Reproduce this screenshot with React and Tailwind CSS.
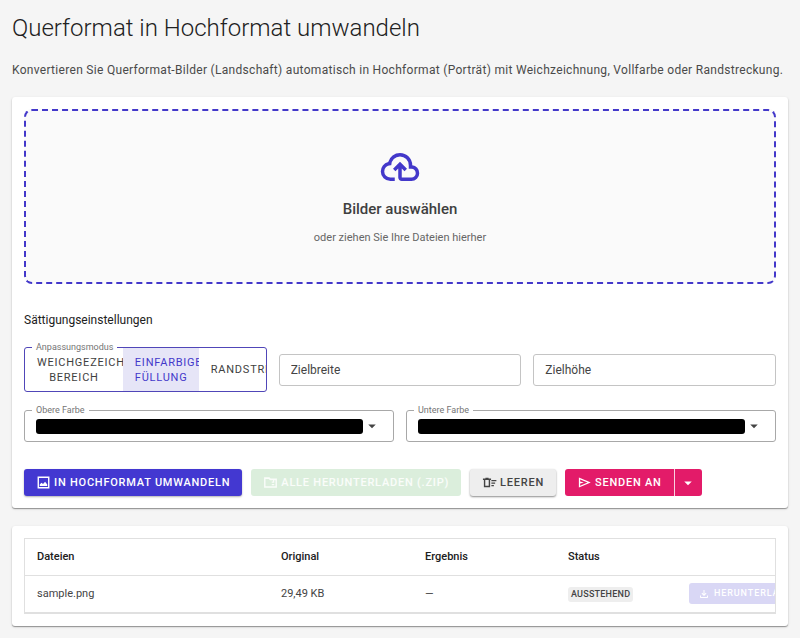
import React from "react";

const paths = {
  upload:
    "M260-160q-91 0-155.5-63T40-377q0-78 47-139t123-78q25-92 100-149t170-57q117 0 198.5 81.5T760-520q69 8 114.5 59.5T920-340q0 75-52.5 127.5T740-160H520q-33 0-56.5-23.5T440-240v-206l-64 62-56-56 160-160 160 160-56 56-64-62v206h220q42 0 71-29t29-71q0-42-29-71t-71-29h-60v-80q0-83-58.5-141.5T480-720q-83 0-141.5 58.5T280-520h-20q-58 0-99 41t-41 99q0 58 41 99t99 41h100v80H260Z",
  image:
    "M100-100v-760h760v760H100Zm90-90h580v-580H190v580Zm50-70v-90l110-120 100 90 130-150 140 170v100H240Z",
  zip: "M70-150v-660h340l80 80h400v580H70Zm90-90h400v-390H450l-80-80H160v470Zm400-390v80h80v80h-80v80h80v80h-80v70h240v-390h-80v80h-80v-80h-80Zm80 80h80v80h-80v-80Zm0 160h80v80h-80v-80Z",
  sweep:
    "M600-240v-80h160v80H600Zm0-320v-80h320v80H600Zm0 160v-80h240v80H600ZM120-640H60v-90h160v-60h200v60h160v90h-60v460H120v-460Zm90 0v370h220v-370H210Z",
  send: "M120-160v-640l760 320-760 320Zm80-120 474-200-474-200v140l240 60-240 60v140Z",
  download:
    "M480-320 280-520l56-58 104 104v-326h80v326l104-104 56 58-200 200ZM240-160q-33 0-56.5-23.5T160-240v-120h80v120h480v-120h80v120q0 33-23.5 56.5T720-160H240Z",
  down: "M480-360 280-560h400L480-360Z",
};

function Icon({ name, className }) {
  return (
    <svg viewBox="0 -960 960 960" fill="currentColor" aria-hidden="true" className={className}>
      <path d={paths[name]} />
    </svg>
  );
}

const modes = [
  { label: "WEICHGEZEICHNETER BEREICH", style: "flex-[74] text-[#3f3f3f]" },
  { label: "EINFARBIGE FÜLLUNG", style: "flex-[52] bg-[#e6e5f7] text-[#4338ca]", on: true },
  { label: "RANDSTRECKUNG", style: "flex-[43] text-[#3f3f3f]" },
];

function SizeField({ label }) {
  return (
    <input
      type="text"
      placeholder={label}
      aria-label={label}
      className="h-8 w-full min-w-0 rounded-[3px] border border-[#c4c4c4] bg-white px-[11px] text-xs text-[#444] placeholder:text-[#444] placeholder:opacity-100"
    />
  );
}

function ColorField({ id, label }) {
  return (
    <div className="relative flex h-8 items-center rounded-[3px] border border-[#a8a8a8] pr-3 pl-[11px]">
      <label htmlFor={id} className="absolute -top-[7px] left-[7px] bg-white px-1 text-[9px] leading-3 text-[#757575]">
        {label}
      </label>
      <input
        id={id}
        type="color"
        defaultValue="#000000"
        className="h-[15px] min-w-0 flex-1 cursor-pointer appearance-none overflow-hidden rounded-[3px] border-0 bg-black p-0 [&::-webkit-color-swatch]:border-0 [&::-webkit-color-swatch-wrapper]:p-0"
      />
      <Icon name="down" className="size-[18px] text-[#444]" />
    </div>
  );
}

const action =
  "flex h-[27px] items-center gap-[3px] rounded-[3px] px-3 text-[11px] font-medium leading-4 tracking-[0.07em] whitespace-nowrap";

export default function App() {
  return (
    <main className="min-h-screen bg-[#f5f5f5] p-3 font-['Roboto',sans-serif] text-[#212121]">
      <h1 className="text-2xl leading-8 font-light">Querformat in Hochformat umwandeln</h1>
      <p className="mt-4 text-xs leading-5 tracking-wide text-[#4a4a4a]">
        Konvertieren Sie Querformat-Bilder (Landschaft) automatisch in Hochformat (Porträt) mit Weichzeichnung, Vollfarbe oder Randstreckung.
      </p>

      <section className="mt-[17px] rounded-[3px] bg-white p-3 shadow-[0_1px_1px_rgba(0,0,0,0.35),0_1px_3px_rgba(0,0,0,0.12)]">
        <button
          type="button"
          className="flex h-[175px] w-full flex-col items-center rounded-lg border-2 border-dashed border-[#4338ca] bg-[#fafafa] pt-[35px]"
        >
          <Icon name="upload" className="size-[42px] text-[#4338ca]" />
          <span className="mt-[11px] text-[15px] leading-5 font-medium text-[#3f3f3f]">Bilder auswählen</span>
          <span className="mt-[9px] text-[11px] leading-5 text-[#666]">oder ziehen Sie Ihre Dateien hierher</span>
        </button>

        <h2 className="mt-[26px] text-xs leading-5">Sättigungseinstellungen</h2>

        <div className="mt-[17px] grid grid-cols-3 items-center gap-3">
          <fieldset className="relative flex h-[45px] min-w-0 rounded-[3px] border border-[#5046b8]">
            <legend className="absolute -top-[7px] left-[7px] bg-white px-1 text-[9px] leading-3 text-[#757575]">
              Anpassungsmodus
            </legend>
            {modes.map((m) => (
              <button
                key={m.label}
                type="button"
                aria-pressed={!!m.on}
                className={`min-w-0 overflow-hidden px-3 text-center text-[11px] leading-[15px] tracking-[0.07em] ${m.style}`}
              >
                {m.label}
              </button>
            ))}
          </fieldset>
          <SizeField label="Zielbreite" />
          <SizeField label="Zielhöhe" />
        </div>

        <div className="mt-[18px] grid grid-cols-2 gap-3">
          <ColorField id="top-color" label="Obere Farbe" />
          <ColorField id="bottom-color" label="Untere Farbe" />
        </div>

        <div className="mt-[27px] flex flex-wrap gap-x-[9px] gap-y-2">
          <button type="button" className={`${action} bg-[#4338d1] text-white shadow-[0_1px_2px_rgba(0,0,0,0.3)]`}>
            <Icon name="image" className="size-[15px]" />
            IN HOCHFORMAT UMWANDELN
          </button>
          <button type="button" disabled className={`${action} bg-[#dbeedc] text-white/85`}>
            <Icon name="zip" className="size-[15px]" />
            ALLE HERUNTERLADEN (.ZIP)
          </button>
          <button type="button" className={`${action} bg-[#eeeeee] text-[#444] shadow-[0_1px_2px_rgba(0,0,0,0.45)]`}>
            <Icon name="sweep" className="size-[15px]" />
            LEEREN
          </button>
          <div className="flex">
            <button type="button" className={`${action} rounded-r-none bg-[#e31b69] text-white`}>
              <Icon name="send" className="size-[15px]" />
              SENDEN AN
            </button>
            <button
              type="button"
              aria-label="Weitere Ziele"
              className="flex h-[27px] w-7 items-center justify-center rounded-r-[3px] border-l border-white/80 bg-[#e31b69] text-white"
            >
              <Icon name="down" className="size-[18px]" />
            </button>
          </div>
        </div>
      </section>

      <section className="mt-[18px] rounded-[3px] bg-white p-3 shadow-[0_1px_1px_rgba(0,0,0,0.35),0_1px_3px_rgba(0,0,0,0.12)]">
        <div className="overflow-hidden border border-b-2 border-[#e0e0e0]">
          <table className="w-full table-fixed text-left text-[11px] leading-[17px]">
            <thead>
              <tr className="h-9 border-b border-[#e0e0e0]">
                <th className="w-[244px] px-3 font-medium">Dateien</th>
                <th className="w-36 px-3 font-medium">Original</th>
                <th className="w-[143px] px-3 font-medium">Ergebnis</th>
                <th className="w-[121px] px-3 font-medium">Status</th>
                <th className="px-3" />
              </tr>
            </thead>
            <tbody>
              <tr className="h-[37px] text-[#444]">
                <td className="px-3">sample.png</td>
                <td className="px-3">29,49 KB</td>
                <td className="px-3">—</td>
                <td className="px-3">
                  <span className="inline-block rounded-[3px] bg-[#eeeeee] px-[3px] text-[9px] leading-[15px] font-medium tracking-wide">
                    AUSSTEHEND
                  </span>
                </td>
                <td className="pl-3">
                  <button
                    type="button"
                    disabled
                    className="flex h-[21px] items-center gap-1 rounded-[3px] bg-[#d9d7f5] px-[9px] text-[9px] font-medium tracking-widest text-white"
                  >
                    <Icon name="download" className="size-3 shrink-0" />
                    HERUNTERLADEN
                  </button>
                </td>
              </tr>
            </tbody>
          </table>
        </div>
      </section>
    </main>
  );
}
